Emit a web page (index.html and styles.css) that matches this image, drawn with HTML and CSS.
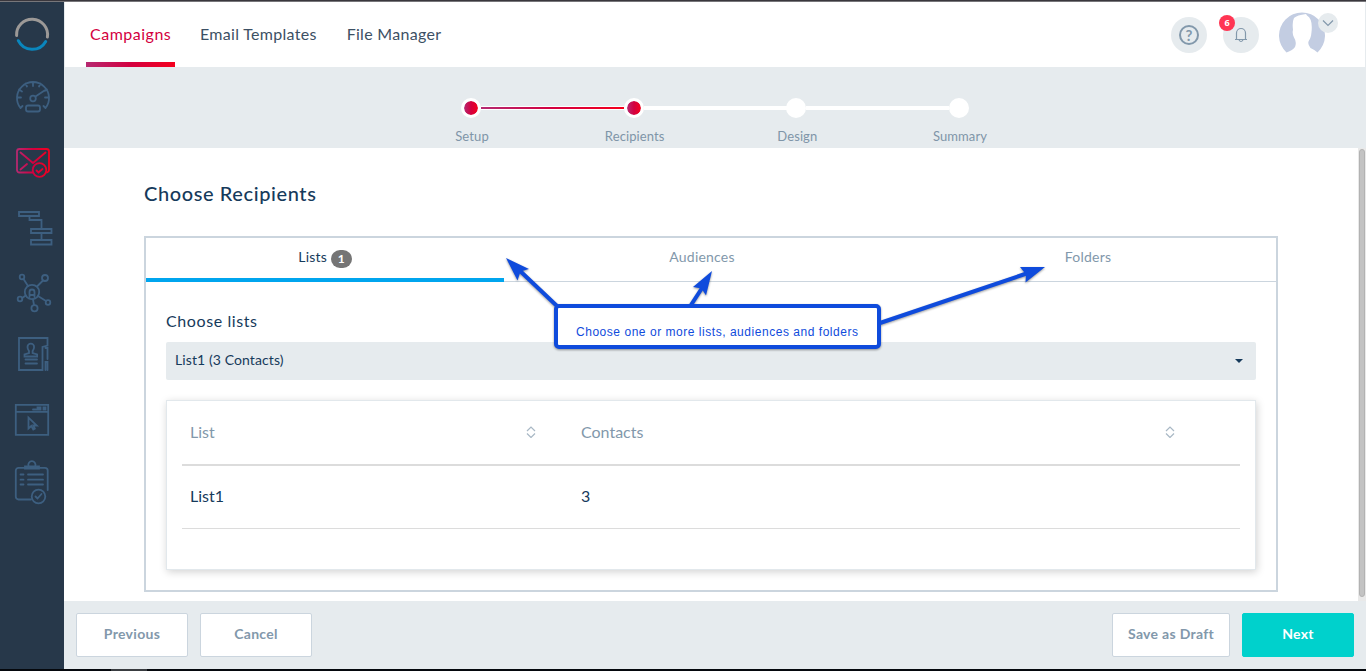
FILE: index.html
```html
<!DOCTYPE html>
<html lang="en">
<head>
    <meta charset="UTF-8">
    <meta name="viewport" content="width=device-width, initial-scale=1.0">
    <title>Choose Recipients</title>
    <link rel="stylesheet" href="styles.css">
</head>
<body>

    <div class="window-top"></div>
    <div class="app">
        <nav class="sidebar">
            <svg class="nav-icon" viewBox="0 0 64 65">
                <path d="M16.6 33.5A15.5 15.5 0 1 1 47.4 35" stroke="#9c9997" stroke-width="3"/>
                <path d="M18.3 38.7A15.5 15.5 0 0 0 45.7 39.5" stroke="#0a86bd" stroke-width="3"/>
            </svg>
            <svg class="nav-icon" viewBox="0 0 64 65">
                <path d="M20.5 41A16 16 0 1 1 45.5 41M20.5 41l2-2M45.5 41l-2-2M17 30.5h4M45 30.5h4M33 15v4M19 22.5l3 2M25.5 16.5l1.5 3M40.5 16.5l-1.5 3M47 22.5l-2 1.2M35.5 29.5l9-6"/>
                <circle cx="33" cy="31.5" r="2.8"/>
                <rect x="26" y="38.5" width="14" height="6" rx="2"/>
            </svg>
            <svg class="nav-icon active" viewBox="0 0 64 65">
                <defs>
                    <linearGradient id="red" gradientUnits="userSpaceOnUse" x1="16" y1="0" x2="50" y2="0">
                        <stop offset="0" stop-color="#b52a72"/>
                        <stop offset="0.5" stop-color="#d3003f"/>
                        <stop offset="1" stop-color="#f5001d"/>
                    </linearGradient>
                </defs>
                <path d="M33 40.5H19.5a2.5 2.5 0 0 1-2.5-2.5V19.5a2.5 2.5 0 0 1 2.5-2.5h27a2.5 2.5 0 0 1 2.5 2.5V38q0 2-2 2.5M20.5 20.5l12.5 10.5 12.5-10.5M20.5 37.5l6.5-5.5"/>
                <circle cx="39.5" cy="38" r="6.8"/>
                <path d="M36.5 38.5l2 2 4-3.5"/>
            </svg>
            <svg class="nav-icon" viewBox="0 0 64 65">
                <path d="M19 15h20v4H19zM29.5 19.5v3.500h12v8.500M31 32h20.500v4H31zM41.500 36.500v6M31 43h20.500v4.500H31z"/>
            </svg>
            <svg class="nav-icon" viewBox="0 0 64 65">
                <circle cx="32" cy="30" r="7.2"/>
                <circle cx="22" cy="15" r="2.3"/>
                <circle cx="45" cy="16" r="3"/>
                <circle cx="20" cy="37" r="2.3"/>
                <circle cx="48" cy="40.5" r="2.3"/>
                <circle cx="34.5" cy="46.3" r="3.1"/>
                <path d="M23.5 17l4.5 7M43 18.5l-6 6M22.2 36l3.5-2.5M38 34l8 5M33 37.5l1 5.5M29.5 35v-5a2.3 2.3 0 0 1 5 0v5M29.500 33h5"/>
            </svg>
            <svg class="nav-icon" viewBox="0 0 64 65">
                <path d="M42.5 43H19V11h28.500v7.500l-5 1.500zM45.500 21h2v11M45.500 43v-8h2v8"/>
                <path d="M29 24q-1.500-2-1.500-4a3.300 3.300 0 0 1 6.600 0q0 2-1.500 4v2l4.500 1.500v2H24.500v-2L29 26zM25.500 32.500h11.500M25.500 36.500h11.500"/>
            </svg>
            <svg class="nav-icon" viewBox="0 0 64 65">
                <path d="M15.800 12.800h32.400v30H15.800zM15.800 19.800h32.400M33 17.500h3M37.500 15.500h3v2h-3zM43.500 15.500h2v2h-2z"/>
                <path d="M28.500 25.500v11l2.800-2.500 2 3.500 1.500-.8-1.500-3.200h3.500z"/>
            </svg>
            <svg class="nav-icon" viewBox="0 0 64 65">
                <path d="M31 42.500H18.500a2.700 2.700 0 0 1-2.700-2.700V13.500a2.700 2.700 0 0 1 2.700-2.700h26.500a2.700 2.700 0 0 1 2.700 2.700V33M20.500 17.500h3M28 17.500h15M20.500 22.700h3M28 22.700h15M20.500 27.500h3M28 27.500h15"/>
                <path d="M25 9.500h14v2H25z"/>
                <path d="M28.500 9a3.600 3.600 0 1 1 6.800 0"/>
                <circle cx="38.500" cy="39.500" r="6.800"/>
                <path d="M35.500 39.500l2 2 4-4.500"/>
            </svg>
        </nav>

        <div class="page">
            <header class="topbar">
                <div class="menu">
                    <a class="menu-item selected">Campaigns</a>
                    <a class="menu-item templates">Email Templates</a>
                    <a class="menu-item files">File Manager</a>
                </div>
                <div class="tools">
                    <div class="round"><span class="help">?</span></div>
                    <div class="round bell">
                        <svg width="14" height="16" viewBox="0 0 14 16">
                            <path d="M1 12.5h12M2.5 12.5V6a4.500 4.500 0 0 1 9 0v6.500M5 13q2 3 4 0"/>
                        </svg>
                        <span class="count">6</span>
                    </div>
                    <div class="avatar">
                        <svg width="46" height="42" viewBox="0 0 46 42">
                            <path fill="#c3cde2" d="M7.5 41.5A23 23 0 1 1 38.5 41.5Q36 39 31.500 37Q28 33 30 29.500Q32 27 32.500 21Q34 8 28 4.500L27 3Q18 4 15 7Q13 11 14 19Q13 22 15 26.500Q18 31 16 36Q14 39 7.500 41.500z"/>
                        </svg>
                        <span class="arrow">
                            <svg width="12" height="8" viewBox="0 0 12 8"><path d="M1 1.5l5 5 5-5"/></svg>
                        </span>
                    </div>
                </div>
            </header>

            <div class="stepper">
                <div class="step done"><span class="dot"></span><span class="label">Setup</span></div>
                <div class="step done"><span class="dot"></span><span class="label">Recipients</span></div>
                <div class="step"><span class="dot"></span><span class="label">Design</span></div>
                <div class="step"><span class="dot"></span><span class="label">Summary</span></div>
            </div>

            <div class="content">
                <main>
                    <h1>Choose Recipients</h1>
                    <div class="panel">
                        <div class="tabs">
                            <div class="tab current">Lists <span class="badge">1</span></div>
                            <div class="tab audiences">Audiences</div>
                            <div class="tab folders">Folders</div>
                        </div>
                        <div class="panel-body">
                            <h2>Choose lists</h2>
                            <div class="select"><span>List1 (3 Contacts)</span><i class="caret"></i></div>
                            <div class="card">
                                <div class="row head">
                                    <div class="col-list">List
                                        <svg class="sort" width="10" height="12" viewBox="0 0 10 12"><path d="M1 5l4-4 4 4M1 7.5l4 4 4-4"/></svg>
                                    </div>
                                    <div class="col-contacts">Contacts
                                        <svg class="sort" width="10" height="12" viewBox="0 0 10 12"><path d="M1 5l4-4 4 4M1 7.5l4 4 4-4"/></svg>
                                    </div>
                                </div>
                                <div class="row">
                                    <div class="col-list">List1</div>
                                    <div class="col-contacts">3</div>
                                </div>
                            </div>
                        </div>
                    </div>
                </main>
                <div class="scrollbar"><div class="thumb"></div></div>
            </div>

            <footer class="actions">
                <button class="btn">Previous</button>
                <button class="btn">Cancel</button>
                <button class="btn draft">Save as Draft</button>
                <button class="btn next">Next</button>
            </footer>
        </div>
    </div>
    <div class="window-bottom"><div class="task"></div></div>

    <!-- callout pointing at the three tabs -->
    <svg class="callout" width="550" height="100" viewBox="500 255 550 100">
        <g class="shapes">
            <path class="line" d="M557 306L518 269M691 305L704 285M880 323L1028 273"/>
            <path class="tip" d="M506 258L529 269L520.5 271.5L517.5 280.5zM712 271L706 295.5L701.5 288.5L693 287zM1045 267L1025.5 282.5L1026 274.5L1020 267z"/>
            <rect x="556" y="306" width="323" height="41" rx="3"/>
        </g>
        <text x="576" y="336" textLength="282" lengthAdjust="spacing">Choose one or more lists, audiences and folders</text>
    </svg>

</body>
</html>
```

FILE: styles.css
```css
* {
    margin: 0;
    padding: 0;
    box-sizing: border-box;
}

body {
    font-family: Lato, 'Noto Sans', sans-serif;
    color: #163a5b;
    width: 1366px;
    height: 671px;
    overflow: hidden;
    position: relative;
    background-color: #fff;
}

svg {
    fill: none;
    display: block;
}

.window-top {
    height: 2px;
    background-color: #3a373d;
    border-bottom: 1px solid #77767a;
}

.window-bottom {
    height: 2px;
    background-color: #05080d;
    padding-left: 111px;
}

.task {
    width: 36px;
    height: 2px;
    background-color: #393c40;
}

.app {
    display: flex;
    height: 667px;
}

/* Sidebar */
.sidebar {
    width: 64px;
    background-color: #27384a;
}

.nav-icon {
    width: 64px;
    height: 65px;
    stroke: #3d5f80;
    stroke-width: 1.8;
    stroke-linecap: round;
}

.nav-icon.active {
    stroke: url(#red);
}

.page {
    flex: 1;
    display: flex;
    flex-direction: column;
}

/* Header */
.topbar {
    height: 65px;
    display: flex;
    justify-content: space-between;
    padding: 0 28px 0 22px;
    border-left: 1px solid #e6ebee;
    border-right: 1px solid #e6ebee;
}

.menu {
    display: flex;
    margin-left: -1px;
}

.menu-item {
    height: 65px;
    line-height: 63px;
    font-size: 16px;
    letter-spacing: 0.3px;
    color: #3c5064;
    margin-left: 25px;
    white-space: nowrap;
}

.menu-item.selected {
    width: 89px;
    margin-left: 0;
    padding-left: 4px;
    letter-spacing: 0.5px;
    color: #d3003f;
    border-bottom: 5px solid;
    border-image: linear-gradient(to right, #b52a72, #d3003f 50%, #f5001d) 1;
}

.menu-item.files {
    margin-left: 30px;
}

.tools {
    display: flex;
}

.round {
    width: 36px;
    height: 36px;
    margin-top: 15px;
    margin-right: 16px;
    border-radius: 50%;
    background-color: #e6ebee;
    display: flex;
    align-items: center;
    justify-content: center;
    position: relative;
}

.help {
    width: 20px;
    height: 20px;
    border: 2px solid #8298ab;
    border-radius: 50%;
    color: #8298ab;
    font: bold 15px/16px Lato, sans-serif;
    text-align: center;
}

.bell {
    margin-right: 20px;
}

.bell svg,
.arrow svg {
    stroke: #8298ab;
    stroke-width: 1.2;
}

.count {
    position: absolute;
    left: -4px;
    top: -2px;
    width: 16px;
    height: 16px;
    border-radius: 50%;
    background-color: #ff3553;
    color: #fff;
    font: bold 9px/16px 'Open Sans', sans-serif;
    text-align: center;
}

.avatar {
    width: 58px;
    margin-top: 9px;
    position: relative;
}

.arrow {
    position: absolute;
    left: 39px;
    top: 2px;
    width: 20px;
    height: 20px;
    border-radius: 50%;
    background-color: #e6ebee;
    display: flex;
    align-items: center;
    justify-content: center;
}

/* Progress steps */
.stepper {
    height: 81px;
    background-color: #e6ebee;
    display: flex;
    justify-content: center;
    padding-top: 31px;
}

.step {
    width: 162.67px;
    display: flex;
    flex-direction: column;
    align-items: center;
    position: relative;
}

.step + .step::before {
    content: '';
    position: absolute;
    top: 8px;
    right: 91px;
    width: 143px;
    height: 4px;
    background-color: #fff;
}

.step + .done::before {
    background: linear-gradient(to right, #b52a72, #d3003f 50%, #f5001d) center / 100% 2px no-repeat #fff;
}

.dot {
    width: 20px;
    height: 20px;
    border-radius: 50%;
    background-color: #fff;
}

.done .dot {
    border: 3px solid #fff;
    background: linear-gradient(to right, #b52a72, #d3003f 50%, #f5001d) padding-box;
}

.label {
    margin: 10px 0 0 2px;
    font-size: 13px;
    line-height: 16px;
    letter-spacing: 0.1px;
    color: #7f95a8;
}

/* Content */
.content {
    height: 453px;
    display: flex;
}

main {
    flex: 1;
    padding: 31px 80px 0;
}

h1 {
    font-size: 20px;
    line-height: 28px;
    font-weight: 500;
    letter-spacing: 0.6px;
}

.panel {
    margin-top: 29px;
    height: 356px;
    border: 2px solid #cbd5de;
}

.tabs {
    display: flex;
    height: 44px;
    border-bottom: 1px solid #cbd5de;
}

.tab {
    height: 44px;
    line-height: 38px;
    font-size: 14px;
    letter-spacing: 0.2px;
    text-align: center;
    color: #8298ab;
}

.tab.current {
    width: 358px;
    color: #163a5b;
    border-bottom: 4px solid #00a5ee;
}

.tab.audiences {
    width: 396px;
}

.tab.folders {
    width: 376px;
}

.badge {
    display: inline-block;
    width: 21px;
    height: 18px;
    border-radius: 9px;
    background-color: #757575;
    color: #fff;
    font-size: 12px;
    font-weight: bold;
    line-height: 18px;
    vertical-align: -1px;
}

.panel-body {
    padding: 28px 20px 0;
}

h2 {
    font-size: 16px;
    font-weight: normal;
    line-height: 22px;
    letter-spacing: 0.6px;
}

.select {
    margin-top: 10px;
    height: 38px;
    padding: 0 13px 0 9px;
    border-radius: 2px;
    background-color: #e6ebee;
    display: flex;
    justify-content: space-between;
    font-size: 14px;
    line-height: 36px;
    letter-spacing: 0.1px;
}

.caret {
    margin-top: 17px;
    height: 4px;
    border: 4px solid transparent;
    border-top-color: #163a5b;
    border-bottom: 0;
}

.card {
    margin-top: 20px;
    height: 170px;
    padding: 0 15px;
    border: 1px solid #e2e8ec;
    box-shadow: 1px 2px 8px rgba(0, 0, 0, 0.18);
}

.row {
    display: flex;
    height: 63px;
    padding-bottom: 3px;
    border-bottom: 1px solid #dcdcdc;
    font-size: 16px;
}

.row.head {
    height: 65px;
    border-bottom-width: 2px;
    color: #8298ab;
}

.col-list,
.col-contacts {
    display: flex;
    justify-content: space-between;
    align-items: center;
    padding-left: 8px;
}

.col-list {
    width: 354px;
}

.col-contacts {
    width: 639px;
    padding-left: 45px;
}

.sort {
    margin-top: 2px;
    stroke: #a9b8c5;
    stroke-width: 1.2;
}

.scrollbar {
    width: 8px;
    background-color: #e9e9e9;
    padding: 1px 1px 0;
}

.thumb {
    height: 448px;
    border: 1px solid #b2b2b2;
    border-radius: 3px;
    background-color: #c3c3c3;
}

/* Bottom buttons */
.actions {
    height: 68px;
    padding: 12px;
    display: flex;
    gap: 12px;
    background-color: #e6ebee;
}

.btn {
    width: 112px;
    height: 44px;
    padding-bottom: 3px;
    border: 1px solid #cbd5de;
    border-radius: 2px;
    background-color: #fff;
    color: #8298ab;
    font: bold 14px Lato, sans-serif;
    letter-spacing: 0.3px;
}

.btn.draft {
    width: 118px;
    margin-left: auto;
}

.btn.next {
    background-color: #00d1cc;
    border-color: #00d1cc;
    color: #fff;
}

/* Callout */
.callout {
    position: absolute;
    left: 500px;
    top: 255px;
}

.shapes {
    filter: drop-shadow(0 1px 1px rgba(0, 0, 0, 0.4));
}

.line,
.callout rect {
    stroke: #0f4bdc;
    stroke-width: 4;
}

.tip {
    fill: #0f4bdc;
}

.callout rect {
    fill: #fff;
}

.callout text {
    fill: #0f4bdc;
    font: 12px 'Liberation Sans', sans-serif;
}
```
